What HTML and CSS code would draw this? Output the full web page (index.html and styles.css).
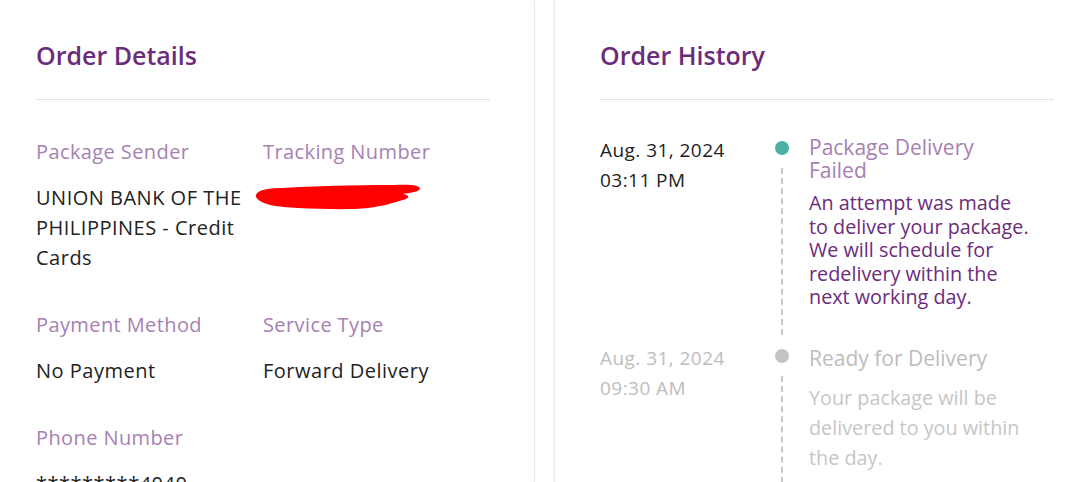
FILE: index.html
```html
<!DOCTYPE html>
<html lang="en">
<head>
<meta charset="utf-8">
<title>Order</title>
<link rel="stylesheet" href="styles.css">
</head>
<body>
<div class="page">
  <section class="card card-details">
    <h2 class="card-title">Order Details</h2>
    <hr class="divider">
    <div class="fields">
      <div class="field">
        <div class="field-label">Package Sender</div>
        <div class="field-value">UNION BANK OF THE PHILIPPINES - Credit Cards</div>
      </div>
      <div class="field">
        <div class="field-label">Tracking Number</div>
        <div class="field-value redacted">
          <svg class="scribble" width="170" height="28" viewBox="0 0 170 28" aria-hidden="true">
            <path d="M3 14 C 2 8, 12 5, 30 5 C 60 3, 100 2, 140 2 C 156 1, 168 2, 167 6 C 165 9, 156 10, 150 11 C 156 12, 158 15, 150 17 C 140 20, 130 23, 115 25 C 95 27, 70 26, 45 25 C 25 24, 8 22, 3 14 Z" fill="#fe0000"/>
          </svg>
        </div>
      </div>
      <div class="field">
        <div class="field-label">Payment Method</div>
        <div class="field-value">No Payment</div>
      </div>
      <div class="field">
        <div class="field-label">Service Type</div>
        <div class="field-value">Forward Delivery</div>
      </div>
      <div class="field">
        <div class="field-label">Phone Number</div>
        <div class="field-value">*********4040</div>
      </div>
    </div>
  </section>

  <section class="card card-history">
    <h2 class="card-title">Order History</h2>
    <hr class="divider">
    <div class="timeline">
      <div class="event event-active">
        <div class="event-date">Aug. 31, 2024<br>03:11 PM</div>
        <div class="event-marker"><span class="dot"></span><span class="rail"></span></div>
        <div class="event-body">
          <div class="event-title">Package Delivery Failed</div>
          <div class="event-desc">An attempt was made to deliver your package. We will schedule for redelivery within the next working day.</div>
        </div>
      </div>
      <div class="event event-past">
        <div class="event-date">Aug. 31, 2024<br>09:30 AM</div>
        <div class="event-marker"><span class="dot"></span><span class="rail"></span></div>
        <div class="event-body">
          <div class="event-title">Ready for Delivery</div>
          <div class="event-desc">Your package will be delivered to you within the day.</div>
        </div>
      </div>
    </div>
  </section>
</div>
</body>
</html>
```

FILE: styles.css
```css
* { box-sizing: border-box; }

html, body {
  margin: 0;
  padding: 0;
  background: #ffffff;
  overflow: hidden;
}

body {
  font-family: "Open Sans", "Noto Sans", sans-serif;
  color: #222222;
}

.page {
  display: flex;
  gap: 19px;
  margin-left: -10px;
  width: 1130px;
  height: 482px;
  overflow: hidden;
}

.card {
  background: #ffffff;
  padding: 39px 46px 0 46px;
  height: 100%;
  overflow: hidden;
}

.card-details {
  width: 545px;
  padding-right: 44px;
  border-right: 1px solid #ececec;
  box-shadow: 1px 0 2px rgba(0,0,0,0.03);
}

.card-history {
  width: 546px;
  padding-left: 45px;
  border-left: 1px solid #ececec;
  box-shadow: -1px 0 2px rgba(0,0,0,0.03);
}

.card-title {
  margin: 0;
  font-size: 25px;
  line-height: 32px;
  font-weight: 600;
  color: #6b2c7b;
}

.divider {
  margin: 28px 0 0 0;
  border: 0;
  border-top: 1px solid #e3e3e3;
  height: 0;
}

/* Order details grid */
.fields {
  display: grid;
  grid-template-columns: 227px 227px;
  row-gap: 40px;
  padding-top: 40px;
}

.field-label {
  font-size: 20px;
  line-height: 24px;
  letter-spacing: 0.4px;
  color: #a681b2;
  font-weight: 500;
}

.field-value {
  margin-top: 19px;
  font-size: 20px;
  line-height: 30px;
  letter-spacing: 0.5px;
  color: #222222;
  padding-right: 8px;
}

.redacted {
  height: 30px;
  margin-left: -10px;
}

.scribble {
  display: block;
  margin-top: 1px;
}

/* Timeline */
.timeline {
  padding-top: 35px;
}

.event {
  display: grid;
  grid-template-columns: 155px 14px 224px;
  column-gap: 20px;
}

.event-active {
  padding-bottom: 34px;
}

.event-date {
  font-size: 19px;
  line-height: 30px;
  letter-spacing: 0.45px;
  color: #222222;
}

.event-marker {
  display: flex;
  flex-direction: column;
  align-items: center;
  padding-top: 6px;
  margin-bottom: -26px;
}

.event-past .event-marker {
  margin-bottom: -40px;
}

.dot {
  width: 14px;
  height: 14px;
  border-radius: 50%;
  flex: none;
}

.rail {
  flex: 1;
  width: 0;
  margin-top: 13px;
  border-left: 2px dashed #c8c8c8;
}

.event-active .dot { background: #4cb0a2; }
.event-past .dot { background: #c4c4c4; }

.event-title {
  font-size: 21px;
  line-height: 23px;
  color: #a57fb2;
  font-weight: 500;
}

.event-active .event-title {
  padding-top: 1px;
}

.event-desc {
  margin-top: 9px;
  font-size: 19.8px;
  line-height: 23.5px;
  color: #6b2c7b;
}

.event-past .event-date { color: #bdbdbd; }

.event-past .event-title {
  color: #bdbdbd;
  line-height: 30px;
}

.event-past .event-desc {
  color: #c6c6c6;
  line-height: 30px;
  margin-top: 10px;
}
```
